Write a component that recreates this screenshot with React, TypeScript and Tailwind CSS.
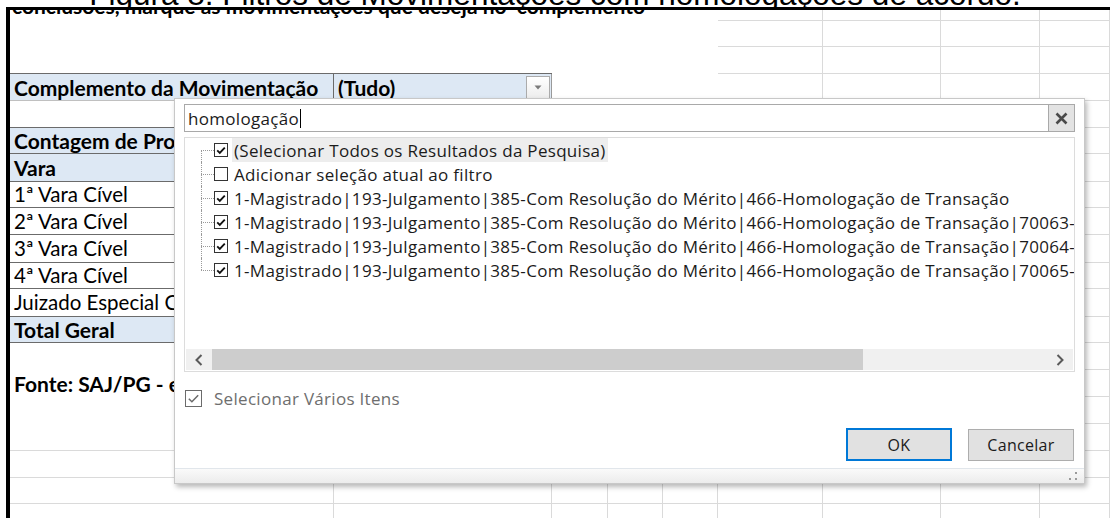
import React from "react";

const SHEET_FONT = "font-['Lato',_'Liberation_Sans',_sans-serif] text-[20.5px] leading-none text-black";
const UI_FONT = "font-['Open_Sans',_'Noto_Sans',_sans-serif] text-[17px] tracking-[0.3px] leading-none";

const GRID = "border-r border-b border-[#dadada]";

const ROW_COUNT = 20;
const COL_COUNT = 9;

type Cell = { cls: string; content?: React.ReactNode; span?: string };

function DropButton() {
  return (
    <div className="ml-auto mr-[1px] flex h-[23px] w-[24px] items-center justify-center border border-[#ababab] bg-gradient-to-b from-white to-[#ededed]">
      <svg width="8" height="5" viewBox="0 0 8 5">
        <path d="M0.5 0.5 L7.5 0.5 L4 4.5 Z" fill="#7a7a7a" />
      </svg>
    </div>
  );
}

const pivotRows: Record<number, { text: string; bold?: boolean; blue?: boolean }> = {
  5: { text: "Contagem de Processos", bold: true, blue: true },
  6: { text: "Vara", bold: true, blue: true },
  7: { text: "1ª Vara Cível" },
  8: { text: "2ª Vara Cível" },
  9: { text: "3ª Vara Cível" },
  10: { text: "4ª Vara Cível" },
  11: { text: "Juizado Especial Cível" },
  12: { text: "Total Geral", bold: true, blue: true },
};

function cellFor(r: number, c: number): Cell | null {
  // columns F..I are plain worksheet cells everywhere
  if (c >= 5) return { cls: GRID };

  if (r === 0) {
    if (c !== 0) return null;
    return {
      span: "col-span-5",
      cls: "overflow-hidden",
      content: (
        <div className="-mt-[15px] ml-[2px] whitespace-nowrap text-[21px] font-bold">
          conclusões, marque as movimentações que deseja no&nbsp;&nbsp;complemento
        </div>
      ),
    };
  }
  if (r === 1) return { cls: "" };
  if (r === 2) {
    if (c <= 1) return { cls: "border-b border-[#6b6b6b]" };
    return { cls: "" };
  }
  if (r === 3) {
    if (c === 0)
      return {
        cls: "flex items-center border-r border-b border-r-[#6b6b6b] border-b-[#c0c0c0] bg-[#dde8f4] pl-[4px] text-[21px] font-bold whitespace-nowrap",
        content: "Complemento da Movimentação",
      };
    if (c === 1)
      return {
        cls: "flex items-center border-r border-b border-r-[#9a9a9a] border-b-[#c0c0c0] bg-[#dde8f4] pl-[4px] text-[21px] font-bold",
        content: (
          <>
            <span>(Tudo)</span>
            <DropButton />
          </>
        ),
      };
    return { cls: "" };
  }

  if (c === 0) {
    if (r === 4) return { cls: "border-b border-[#6b6b6b]" };
    const p = pivotRows[r];
    if (p) {
      return {
        cls:
          "flex items-center overflow-hidden whitespace-nowrap border-b border-[#6b6b6b] pl-[4px] " +
          (p.bold ? "text-[21px] font-bold " : "") +
          (p.blue ? "bg-[#dde8f4]" : "bg-white"),
        content: p.text,
      };
    }
    if (r === 13 || r === 15) return { cls: "" };
    if (r === 14)
      return {
        cls: "flex items-center whitespace-nowrap pl-[4px] text-[21px] font-bold",
        content: "Fonte: SAJ/PG - elaboração própria",
      };
    return { cls: GRID };
  }
  return { cls: GRID };
}

function Sheet() {
  const cells: React.ReactNode[] = [];
  for (let r = 0; r < ROW_COUNT; r++) {
    for (let c = 0; c < COL_COUNT; c++) {
      const cell = cellFor(r, c);
      if (!cell) continue;
      cells.push(
        <div key={`${r}-${c}`} className={`${cell.span ?? ""} ${cell.cls}`}>
          {cell.content}
        </div>
      );
    }
  }
  return (
    <div
      className={`grid grid-cols-[324px_218px_56px_55px_55px_105px_118px_99px_1fr] grid-rows-[11px_26px_27px_27px_27px_26px_28px_26px_27px_28px_26px_28px_26px_27px_27px_27px_27px_27px_26px_30px] ${SHEET_FONT}`}
    >
      {cells}
    </div>
  );
}

function Check({ color = "#111", size = 13 }: { color?: string; size?: number }) {
  return (
    <svg width={size} height={size} viewBox="0 0 13 13">
      <path d="M2.4 6.4 L5.2 9.2 L10.6 3.4" fill="none" stroke={color} strokeWidth="2" />
    </svg>
  );
}

const items: { text: string; checked: boolean; hot?: boolean }[] = [
  { text: "(Selecionar Todos os Resultados da Pesquisa)", checked: true, hot: true },
  { text: "Adicionar seleção atual ao filtro", checked: false },
  { text: "1-Magistrado|193-Julgamento|385-Com Resolução do Mérito|466-Homologação de Transação", checked: true },
  {
    text: "1-Magistrado|193-Julgamento|385-Com Resolução do Mérito|466-Homologação de Transação|70063-Acordo",
    checked: true,
  },
  {
    text: "1-Magistrado|193-Julgamento|385-Com Resolução do Mérito|466-Homologação de Transação|70064-Acordo",
    checked: true,
  },
  {
    text: "1-Magistrado|193-Julgamento|385-Com Resolução do Mérito|466-Homologação de Transação|70065-Acordo",
    checked: true,
  },
];

function TreeItem({ text, checked, hot, first, last }: { text: string; checked: boolean; hot?: boolean; first: boolean; last: boolean }) {
  return (
    <div className="flex h-[24px] items-stretch">
      <div className="ml-[16px] flex w-[13px] shrink-0 flex-col">
        <div className={`h-[12px] ${first ? "" : "border-l border-dotted border-[#9a9a9a]"}`} />
        <div className={`flex-1 border-t border-dotted border-[#9a9a9a] ${last ? "" : "border-l"}`} />
      </div>
      <div className="flex items-center">
        <div className="flex h-[14px] w-[14px] items-center justify-center border border-[#333] bg-white">
          {checked && <Check />}
        </div>
      </div>
      <div className={`ml-[4px] flex items-center whitespace-nowrap px-[2px] text-[#1b1b1b] ${hot ? "bg-[#ededed]" : ""}`}>
        {text}
      </div>
    </div>
  );
}

function Chevron({ dir }: { dir: "left" | "right" }) {
  return (
    <svg width="8" height="12" viewBox="0 0 8 12">
      <path
        d={dir === "left" ? "M6.5 1 L1.5 6 L6.5 11" : "M1.5 1 L6.5 6 L1.5 11"}
        fill="none"
        stroke="#5a5a5a"
        strokeWidth="2"
      />
    </svg>
  );
}

function FilterDialog() {
  return (
    <div
      className={`absolute left-[174px] top-[98px] flex h-[386px] w-[911px] flex-col border border-[#c8c8c8] bg-white shadow-[2px_3px_5px_rgba(0,0,0,0.28)] ${UI_FONT}`}
    >
      {/* search box */}
      <div className="mx-[9px] mt-[5px] flex h-[28px] border border-[#a9a9a9]">
        <div className="flex flex-1 items-center pl-[3px] text-[#1b1b1b]">
          <span>homologação</span>
          <span className="ml-[1px] h-[19px] w-[1px] bg-black" />
        </div>
        <div className="flex w-[26px] items-center justify-center border-l border-[#a9a9a9] bg-[#e3e3e3]">
          <svg width="13" height="13" viewBox="0 0 13 13">
            <path d="M1.5 1.5 L11.5 11.5 M11.5 1.5 L1.5 11.5" stroke="#4a4a4a" strokeWidth="2.6" />
          </svg>
        </div>
      </div>

      {/* value list */}
      <div className="mx-[9px] mt-[5px] flex h-[235px] flex-col border border-[#dcdcdc]">
        <div className="flex-1 overflow-hidden">
          {items.map((it, i) => (
            <TreeItem key={i} {...it} first={i === 0} last={i === items.length - 1} />
          ))}
        </div>
        <div className="mx-[1px] mb-[1px] flex h-[21px] bg-[#f0f0f0]">
          <div className="flex w-[26px] items-center justify-center">
            <Chevron dir="left" />
          </div>
          <div className="w-[651px] bg-[#cdcdcd]" />
          <div className="flex-1" />
          <div className="flex w-[26px] items-center justify-center">
            <Chevron dir="right" />
          </div>
        </div>
      </div>

      {/* multi-select toggle */}
      <div className="ml-[10px] mt-[18px] flex h-[17px] items-center">
        <div className="flex h-[17px] w-[17px] items-center justify-center border border-[#6b6b6b]">
          <svg width="13" height="13" viewBox="0 0 13 13">
            <path d="M1.8 6.8 L4.9 9.8 L11.2 3.2" fill="none" stroke="#6b6b6b" strokeWidth="1.5" />
          </svg>
        </div>
        <span className="ml-[12px] text-[#6e6e6e]">Selecionar Vários Itens</span>
      </div>

      {/* actions */}
      <div className="mr-[10px] mt-[21px] flex items-start justify-end gap-[16px] text-[16px] text-[#1b1b1b]">
        <button className="flex h-[33px] w-[106px] items-center justify-center border-2 border-[#0078d7] bg-[#e1e1e1]">
          OK
        </button>
        <button className="mt-[1px] flex h-[32px] w-[106px] items-center justify-center border border-[#adadad] bg-[#e1e1e1]">
          Cancelar
        </button>
      </div>

      {/* footer with size grip */}
      <div className="mt-auto flex h-[15px] items-end justify-end border-t border-[#e1e6eb] bg-gradient-to-b from-[#fafafa] to-[#ececec] pb-[2px] pr-[6px]">
        <svg width="9" height="9" viewBox="0 0 9 9">
          <rect x="6" y="0" width="2" height="2" fill="#9a9a9a" />
          <rect x="0" y="6" width="2" height="2" fill="#9a9a9a" />
          <rect x="6" y="6" width="2" height="2" fill="#9a9a9a" />
        </svg>
      </div>
    </div>
  );
}

export default function App() {
  return (
    <div className="relative h-[518px] w-[1110px] overflow-hidden bg-white">
      {/* figure caption, mostly scrolled off the top */}
      <div className="h-[7px] overflow-hidden">
        <div className="-mt-[21px] whitespace-nowrap text-center font-['Liberation_Sans',_Arial,_sans-serif] text-[31.5px] leading-none text-black">
          Figura 8: Filtros de Movimentações com homologações de acordo.
        </div>
      </div>

      {/* framed worksheet */}
      <div className="ml-[6px] border-l-4 border-t-[3px] border-black">
        <Sheet />
      </div>

      <FilterDialog />
    </div>
  );
}
